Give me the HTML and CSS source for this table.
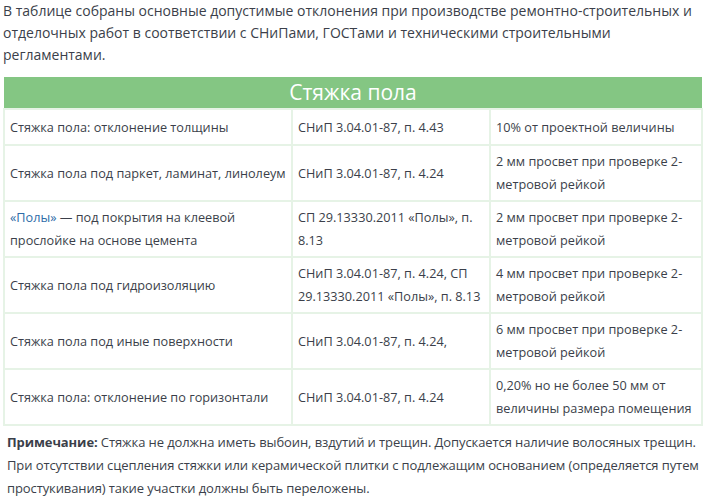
FILE: index.html
```html
<!DOCTYPE html>
<html lang="ru">
<head>
<meta charset="utf-8">
<link rel="stylesheet" href="styles.css">
</head>
<body>
<div class="page">
  <p class="intro">В таблице собраны основные допустимые отклонения при производстве ремонтно-строительных и отделочных работ в соответствии с СНиПами, ГОСТами и техническими строительными регламентами.</p>
  <table class="tbl">
    <colgroup><col class="c1"><col class="c2"><col class="c3"></colgroup>
    <thead>
      <tr><th colspan="3">Стяжка пола</th></tr>
    </thead>
    <tbody>
      <tr class="r-short"><td>Стяжка пола: отклонение толщины</td><td>СНиП 3.04.01-87, п. 4.43</td><td>10% от проектной величины</td></tr>
      <tr><td>Стяжка пола под паркет, ламинат, линолеум</td><td>СНиП 3.04.01-87, п. 4.24</td><td>2 мм просвет при проверке 2-метровой рейкой</td></tr>
      <tr><td><a class="lnk">«Полы»</a> — под покрытия на клеевой прослойке на основе цемента</td><td>СП 29.13330.2011 «Полы», п. 8.13</td><td>2 мм просвет при проверке 2-метровой рейкой</td></tr>
      <tr><td>Стяжка пола под гидроизоляцию</td><td>СНиП 3.04.01-87, п. 4.24, СП 29.13330.2011 «Полы», п. 8.13</td><td>4 мм просвет при проверке 2-метровой рейкой</td></tr>
      <tr><td>Стяжка пола под иные поверхности</td><td>СНиП 3.04.01-87, п. 4.24,</td><td>6 мм просвет при проверке 2-метровой рейкой</td></tr>
      <tr><td>Стяжка пола: отклонение по горизонтали</td><td>СНиП 3.04.01-87, п. 4.24</td><td>0,20% но не более 50 мм от величины размера помещения</td></tr>
    </tbody>
  </table>
  <p class="note"><b>Примечание:</b> Стяжка не должна иметь выбоин, вздутий и трещин. Допускается наличие волосяных трещин. При отсутствии сцепления стяжки или керамической плитки с подлежащим основанием (определяется путем простукивания) такие участки должны быть переложены.</p>
</div>
</body>
</html>
```

FILE: styles.css
```css
html, body {
  margin: 0;
  padding: 0;
  background: #ffffff;
}
.page {
  width: 703px;
  font-family: "Open Sans", "Noto Sans", sans-serif;
  color: #3b3f4a;
}
.intro {
  margin: 0;
  padding: 0 0 0 3px;
  font-size: 14px;
  line-height: 22px;
}
.tbl {
  margin: 11px 0 0 3px;
  width: 698px;
  border-collapse: collapse;
  table-layout: fixed;
  font-size: 12.7px;
  line-height: 23px;
}
.c1 { width: 288px; }
.c2 { width: 198px; }
.c3 { width: 212px; }
.tbl th {
  background: #84c683;
  color: #ffffff;
  font-weight: normal;
  font-size: 21px;
  line-height: 31px;
  padding: 0;
  text-align: center;
  border: 2px solid #e6f3e6;
  border-top: none;
  border-left: none;
  border-right: none;
}
.tbl td {
  border: 2px solid #e6f3e6;
  padding: 4px 4px 4px 5px;
  height: 46px;
  vertical-align: middle;
}
.tbl tr.r-short td {
  height: 26px;
}
.lnk {
  color: #2e6ca8;
  text-decoration: none;
}
.note {
  margin: 5px 0 0 0;
  padding: 0 0 0 7px;
  font-size: 13px;
  line-height: 23px;
  letter-spacing: -0.1px;
}
.note b {
  font-weight: bold;
}
```
